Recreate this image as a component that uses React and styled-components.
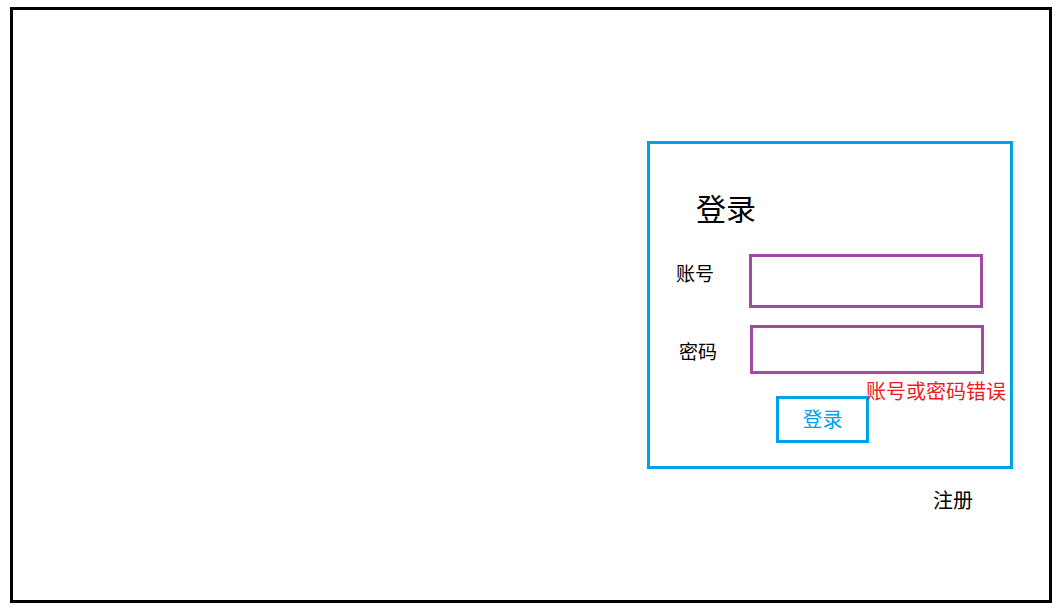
import React from 'react';
import styled, { createGlobalStyle } from 'styled-components';

const GlobalStyle = createGlobalStyle`
  body {
    margin: 0;
    background: #ffffff;
    font-family: "Noto Sans CJK SC", "Noto Sans", sans-serif;
  }
`;

const Frame = styled.div`
  box-sizing: border-box;
  margin: 7px 0 0 10px;
  width: 1042px;
  height: 596px;
  border: 3px solid #000000;
  display: flex;
  flex-direction: column;
  align-items: flex-end;
  padding: 131px 36px 0 0;
`;

const LoginBox = styled.div`
  box-sizing: border-box;
  width: 366px;
  height: 328px;
  border: 3px solid #00a2e8;
  display: flex;
  flex-direction: column;
`;

const Title = styled.h1`
  margin: 48px 0 0 46px;
  font-size: 30px;
  line-height: 30px;
  font-weight: 400;
  color: #000000;
`;

const Field = styled.div`
  display: flex;
  align-items: flex-start;
  margin-top: ${(p) => p.$gap}px;
`;

const LabelCell = styled.label`
  box-sizing: border-box;
  width: ${(p) => p.$width}px;
  padding: ${(p) => p.$top}px 0 0 ${(p) => p.$left}px;
  font-size: 19px;
  line-height: 19px;
  color: #000000;
`;

const TextInput = styled.input`
  box-sizing: border-box;
  width: 234px;
  height: ${(p) => p.$height}px;
  border: 3px solid #a349a4;
  border-radius: 0;
  outline: none;
  padding: 0 8px;
  font-size: 18px;
  background: #ffffff;
`;

const Footer = styled.div`
  display: flex;
  align-items: flex-start;
  margin-top: 7px;
`;

const LoginButton = styled.button`
  box-sizing: border-box;
  width: 93px;
  height: 47px;
  margin: 15px 0 0 126px;
  border: 3px solid #00a2e8;
  background: #ffffff;
  color: #00a2e8;
  font-family: inherit;
  font-size: 20px;
  line-height: 20px;
  padding: 0 0 2px;
  cursor: pointer;
`;

const ErrorText = styled.span`
  margin-left: -3px;
  font-size: 20px;
  line-height: 20px;
  color: #ed1c24;
  white-space: nowrap;
`;

const RegisterLink = styled.a`
  margin: 21px 40px 0 0;
  font-size: 20px;
  line-height: 20px;
  color: #000000;
  text-decoration: none;
  cursor: pointer;
`;

const App = () => {
  return (
    <>
      <GlobalStyle />
      <Frame>
        <LoginBox>
          <Title>登录</Title>
          <Field $gap={32}>
            <LabelCell $width={99} $left={26} $top={9}>账号</LabelCell>
            <TextInput type="text" $height={54} />
          </Field>
          <Field $gap={17}>
            <LabelCell $width={100} $left={29} $top={16}>密码</LabelCell>
            <TextInput type="password" $height={49} />
          </Field>
          <Footer>
            <LoginButton>登录</LoginButton>
            <ErrorText>账号或密码错误</ErrorText>
          </Footer>
        </LoginBox>
        <RegisterLink>注册</RegisterLink>
      </Frame>
    </>
  );
};

export default App;
